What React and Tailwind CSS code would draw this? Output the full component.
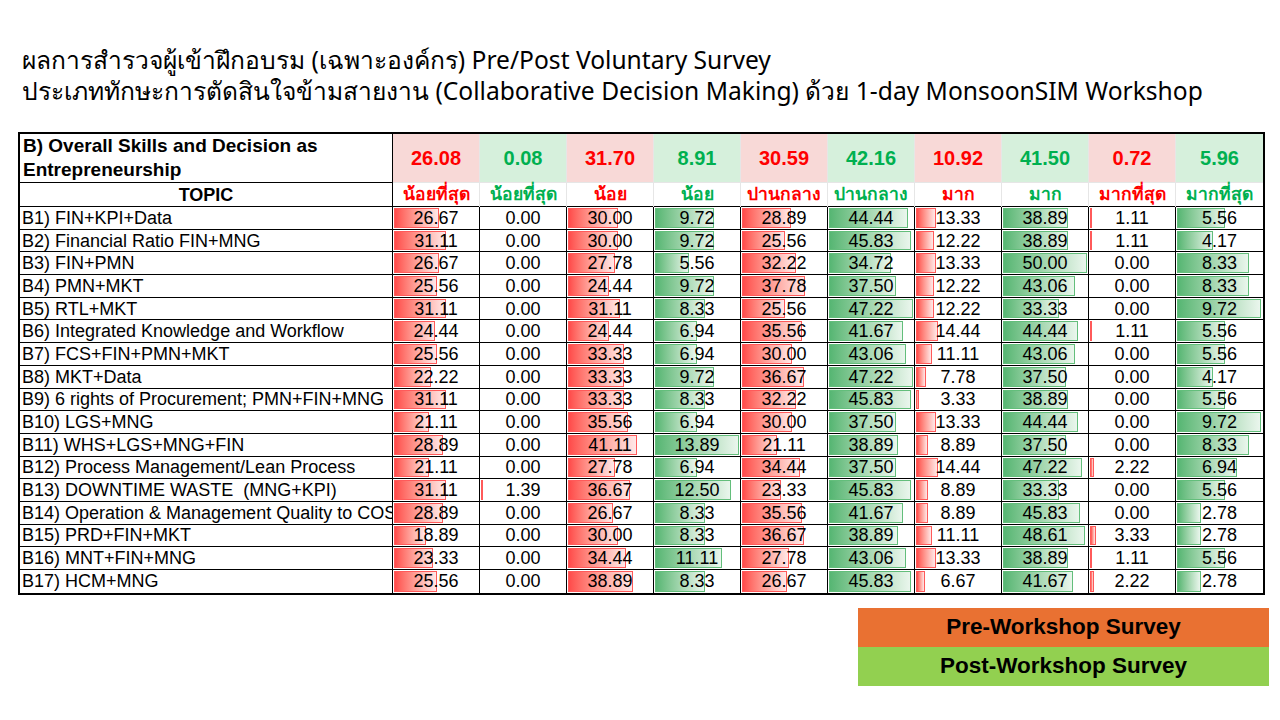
import React from "react";

const rows = [
  ["B1) FIN+KPI+Data", [26.67, 0.0, 30.0, 9.72, 28.89, 44.44, 13.33, 38.89, 1.11, 5.56]],
  ["B2) Financial Ratio FIN+MNG", [31.11, 0.0, 30.0, 9.72, 25.56, 45.83, 12.22, 38.89, 1.11, 4.17]],
  ["B3) FIN+PMN", [26.67, 0.0, 27.78, 5.56, 32.22, 34.72, 13.33, 50.0, 0.0, 8.33]],
  ["B4) PMN+MKT", [25.56, 0.0, 24.44, 9.72, 37.78, 37.5, 12.22, 43.06, 0.0, 8.33]],
  ["B5) RTL+MKT", [31.11, 0.0, 31.11, 8.33, 25.56, 47.22, 12.22, 33.33, 0.0, 9.72]],
  ["B6) Integrated Knowledge and Workflow", [24.44, 0.0, 24.44, 6.94, 35.56, 41.67, 14.44, 44.44, 1.11, 5.56]],
  ["B7) FCS+FIN+PMN+MKT", [25.56, 0.0, 33.33, 6.94, 30.0, 43.06, 11.11, 43.06, 0.0, 5.56]],
  ["B8) MKT+Data", [22.22, 0.0, 33.33, 9.72, 36.67, 47.22, 7.78, 37.5, 0.0, 4.17]],
  ["B9) 6 rights of Procurement; PMN+FIN+MNG", [31.11, 0.0, 33.33, 8.33, 32.22, 45.83, 3.33, 38.89, 0.0, 5.56]],
  ["B10) LGS+MNG", [21.11, 0.0, 35.56, 6.94, 30.0, 37.5, 13.33, 44.44, 0.0, 9.72]],
  ["B11) WHS+LGS+MNG+FIN", [28.89, 0.0, 41.11, 13.89, 21.11, 38.89, 8.89, 37.5, 0.0, 8.33]],
  ["B12) Process Management/Lean Process", [21.11, 0.0, 27.78, 6.94, 34.44, 37.5, 14.44, 47.22, 2.22, 6.94]],
  ["B13) DOWNTIME WASTE\u00a0 (MNG+KPI)", [31.11, 1.39, 36.67, 12.5, 23.33, 45.83, 8.89, 33.33, 0.0, 5.56]],
  ["B14) Operation & Management Quality to COS", [28.89, 0.0, 26.67, 8.33, 35.56, 41.67, 8.89, 45.83, 0.0, 2.78]],
  ["B15) PRD+FIN+MKT", [18.89, 0.0, 30.0, 8.33, 36.67, 38.89, 11.11, 48.61, 3.33, 2.78]],
  ["B16) MNT+FIN+MNG", [23.33, 0.0, 34.44, 11.11, 27.78, 43.06, 13.33, 38.89, 1.11, 5.56]],
  ["B17) HCM+MNG", [25.56, 0.0, 38.89, 8.33, 26.67, 45.83, 6.67, 41.67, 2.22, 2.78]],
];

const headNums = ["26.08", "0.08", "31.70", "8.91", "30.59", "42.16", "10.92", "41.50", "0.72", "5.96"];
const labels = ["น้อยที่สุด", "น้อยที่สุด", "น้อย", "น้อย", "ปานกลาง", "ปานกลาง", "มาก", "มาก", "มากที่สุด", "มากที่สุด"];

// green columns scaled to their own max
const greenMax = { 3: 13.89, 5: 47.22, 7: 50.0, 9: 9.72 };

function barFor(ci, v) {
  if (v <= 0) return null;
  if (greenMax[ci]) {
    return { w: (84 * v) / greenMax[ci], green: true };
  }
  if (ci === 6) return { w: Math.max(2, 1.73 * v - 3), green: false };
  return { w: Math.max(2, 1.68 * v), green: false };
}

const font = { fontFamily: '"Liberation Sans", Arial, "Noto Sans", sans-serif' };

function DataCell({ ci, v, last }) {
  const bar = barFor(ci, v);
  return (
    <div
      className={
        "relative flex items-center justify-center h-full " +
        (last ? "" : "border-r border-black")
      }
    >
      {bar && (
        <div
          className={
            "absolute left-[1px] top-[1px] bottom-[1px] border " +
            (bar.green
              ? "border-[#63be7b] bg-gradient-to-r from-[#56b673] to-[#eaf6ed]"
              : "border-[#ff5a5a] bg-gradient-to-r from-[#ff4a4a] to-[#ffe8e8]")
          }
          style={{ width: bar.w + "px" }}
        />
      )}
      <span className="relative text-[18px] leading-none text-black">{v.toFixed(2)}</span>
    </div>
  );
}

export default function App() {
  return (
    <div className="w-[1280px] h-[720px] bg-white overflow-hidden">
      <div
        className="pt-[44px] pl-[22px] text-[24.6px] leading-[31px] text-black whitespace-nowrap"
        style={{ fontFamily: '"Noto Sans", "Open Sans", sans-serif' }}
      >
        <div>ผลการสำรวจผู้เข้าฝึกอบรม (เฉพาะองค์กร) Pre/Post Voluntary Survey</div>
        <div>ประเภททักษะการตัดสินใจข้ามสายงาน (Collaborative Decision Making) ด้วย 1-day MonsoonSIM Workshop</div>
      </div>

      <div className="mt-[26px] ml-[18px] w-[1247px] border-2 border-black" style={font}>
        {/* header numbers */}
        <div className="grid grid-cols-[373px_repeat(10,87px)] h-[46px]">
          <div className="flex flex-col justify-center px-[3px] border-r border-b border-black text-[19px] font-bold leading-[24px]">
            <div>B) Overall Skills and Decision as</div>
            <div>Entrepreneurship</div>
          </div>
          {headNums.map((n, i) => (
            <div
              key={i}
              className={
                "flex items-center justify-center text-[20px] font-bold border-b border-[#e6e6e6] " +
                (i < 9 ? "border-r " : "") +
                (i % 2 === 0 ? "bg-[#f8d9d7] text-[#ff0000]" : "bg-[#d6f0dc] text-[#00b050]")
              }
            >
              {n}
            </div>
          ))}
        </div>
        {/* labels */}
        <div className="grid grid-cols-[373px_repeat(10,87px)] h-[27px] border-b border-black">
          <div className="flex items-center justify-center border-r border-black text-[18px] font-bold pt-[2px]">TOPIC</div>
          {labels.map((l, i) => (
            <div
              key={i}
              className={
                "flex items-center justify-center text-[17.5px] font-bold whitespace-nowrap " +
                (i < 9 ? "border-r border-[#e6e6e6] " : "") +
                (i % 2 === 0 ? "text-[#ff0000]" : "text-[#00b050]")
              }
            >
              {l}
            </div>
          ))}
        </div>
        {/* body */}
        {rows.map(([name, vals], ri) => (
          <div
            key={ri}
            className={
              "grid grid-cols-[373px_repeat(10,87px)] h-[22.7px] " +
              (ri < rows.length - 1 ? "border-b border-black" : "")
            }
          >
            <div className="flex items-center px-[2px] border-r border-black overflow-hidden whitespace-nowrap text-[18px] leading-none">
              {name}
            </div>
            {vals.map((v, ci) => (
              <DataCell key={ci} ci={ci} v={v} last={ci === 9} />
            ))}
          </div>
        ))}
      </div>

      <div className="flex justify-end pr-[11px] mt-[13px]" style={font}>
        <div className="w-[411px]">
          <div className="h-[39px] flex items-center justify-center bg-[#e97132] text-[22.5px] font-bold text-black">
            Pre-Workshop Survey
          </div>
          <div className="h-[39px] flex items-center justify-center bg-[#92d050] text-[22.5px] font-bold text-black">
            Post-Workshop Survey
          </div>
        </div>
      </div>
    </div>
  );
}
